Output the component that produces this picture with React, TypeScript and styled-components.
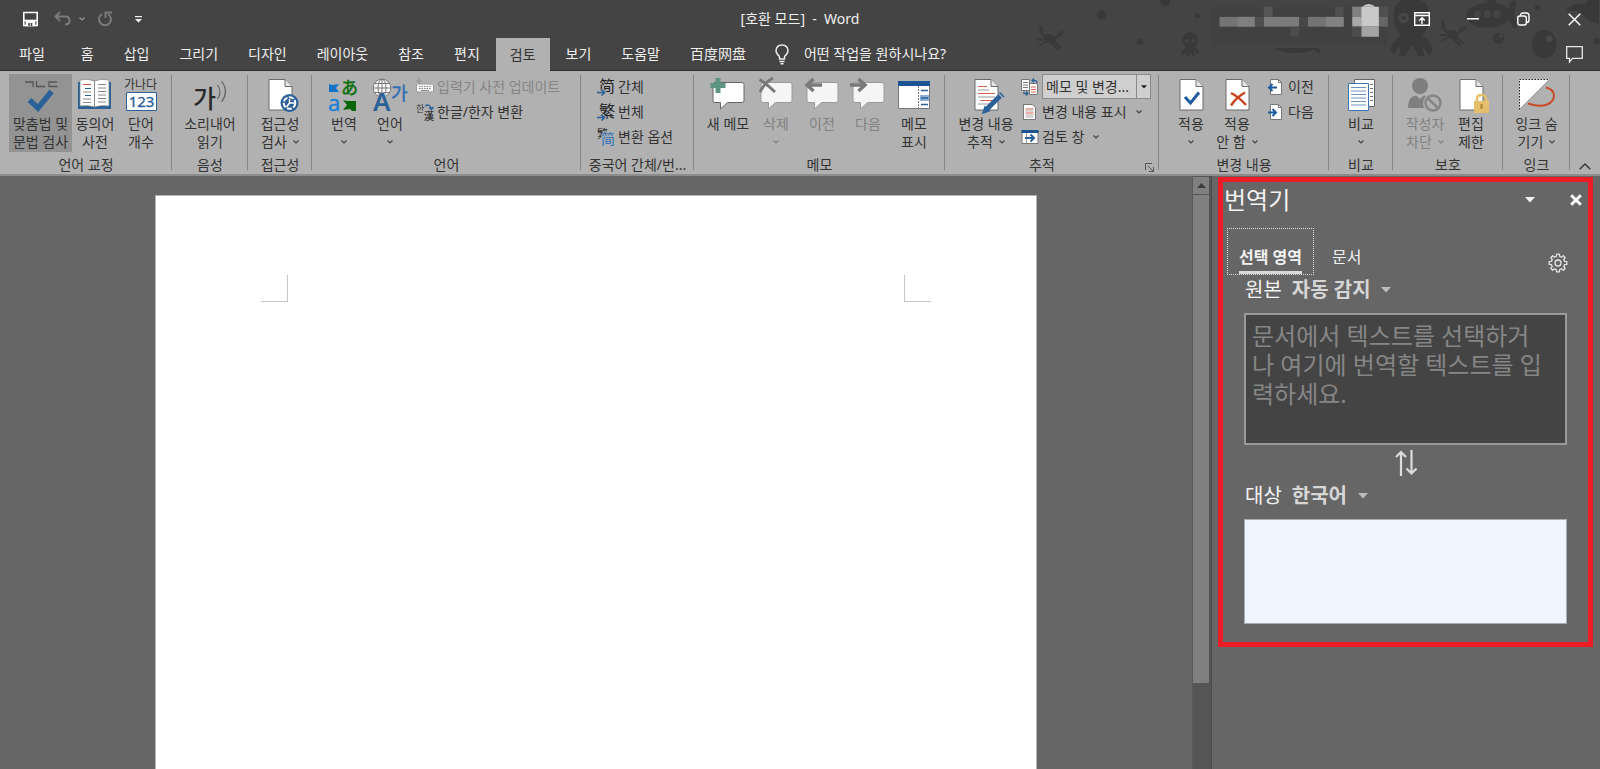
import React from "react";
import styled, { createGlobalStyle, css } from "styled-components";

const FONT = `"Noto Sans", "Noto Sans CJK KR", "Noto Sans CJK SC", sans-serif`;

const GlobalStyle = createGlobalStyle`
  *, *::before, *::after { box-sizing: border-box; }
  body { margin: 0; background: #666; font-family: ${FONT}; font-size: 14px; line-height: 18px; color: #333; }
  button, select, textarea { font: inherit; color: inherit; margin: 0; padding: 0; border: 0; background: none; border-radius: 0; }
  svg { display: block; flex: none; overflow: visible; }
  h1, h2 { margin: 0; font-weight: 400; }
`;

/* ---------- Frame ---------- */

const Window = styled.div`
  display: flex;
  flex-direction: column;
  min-height: 100vh;
  overflow: hidden;
`;

const Header = styled.header`
  position: relative;
  background: #444;
  color: #f0f0f0;
  border-bottom: 1px solid #2e2c2d;
`;

const SeaPattern = styled.svg`
  position: absolute;
  top: 0;
  right: 0;
  overflow: hidden;
`;

const TitleBar = styled.div`
  position: relative;
  display: grid;
  grid-template-columns: 1fr auto 1fr;
  align-items: center;
  height: 38px;
`;

const QuickAccess = styled.div`
  display: flex;
  align-items: center;
  padding-left: 22px;
`;

const QuickButton = styled.button<{ $gap: number }>`
  margin-right: ${(p) => p.$gap}px;
`;

const Title = styled.h1`
  font-size: 14px;
  line-height: 18px;
  white-space: pre;
`;

const WindowControls = styled.div`
  display: flex;
  justify-content: flex-end;
`;

const WindowButton = styled.button`
  display: grid;
  place-items: center;
  width: 51px;
  height: 36px;
`;

const TabBar = styled.nav`
  position: relative;
  display: flex;
  height: 32px;
  padding-left: 4px;
`;

const Tab = styled.button<{ $active?: boolean; $wide?: boolean }>`
  padding: 0 14px;
  margin: 0 ${(p) => (p.$wide ? 7 : 1)}px 0 1px;
  white-space: nowrap;
  ${(p) => p.$active && css`
    background: #b1b1b1;
    height: 33px;
    color: #333;
  `}
`;

const TellMe = styled.button`
  display: flex;
  align-items: center;
  gap: 15px;
  margin-left: 14px;
  white-space: nowrap;
`;

const CommentButton = styled.button`
  margin-left: auto;
  padding: 0 17px;
`;

/* ---------- Ribbon ---------- */

const Ribbon = styled.div`
  display: flex;
  height: 105px;
  background: #b1b1b1;
  border-bottom: 2px solid #8d8d8d;
`;

const Group = styled.section<{ $width: number; $pad?: number }>`
  flex: none;
  position: relative;
  display: flex;
  flex-direction: column;
  width: ${(p) => p.$width}px;
  padding: 3px 0 0 ${(p) => p.$pad ?? 0}px;

  &::after {
    content: "";
    position: absolute;
    top: 4px;
    right: 0;
    width: 1px;
    height: 95px;
    background: #858585;
  }
`;

const GroupBody = styled.div<{ $center?: boolean }>`
  display: flex;
  height: 81px;
  justify-content: ${(p) => (p.$center ? "center" : "flex-start")};
`;

const GroupFooter = styled.div<{ $pad?: number }>`
  display: flex;
  align-items: center;
  height: 19px;
  margin-left: -${(p) => p.$pad ?? 0}px;
`;

const GroupName = styled.h2`
  flex: 1;
  font-size: 14px;
  line-height: 18px;
  text-align: center;
  white-space: nowrap;
`;

const Launcher = styled.button`
  padding: 6px 5px 0 6px;
`;

const BigButton = styled.button<{ $width: number; $pressed?: boolean }>`
  flex: none;
  display: flex;
  flex-direction: column;
  align-items: center;
  width: ${(p) => p.$width}px;
  height: 78px;
  padding-top: 4px;
  background: ${(p) => (p.$pressed ? "#939393" : "none")};
  white-space: nowrap;

  &:disabled { color: #818181; }
`;

const BigLabel = styled.span`
  display: flex;
  align-items: center;
  gap: 6px;
  height: 18px;

  svg + & { margin-top: 3px; }
`;

const SmallList = styled.div<{ $pad: number }>`
  flex: none;
  display: flex;
  flex-direction: column;
  padding-left: ${(p) => p.$pad}px;
`;

const SmallButton = styled.button`
  display: flex;
  align-items: center;
  gap: 3px;
  height: 25px;
  white-space: nowrap;

  &:disabled { color: #858585; }
`;

const SmallLabel = styled.span`
  margin-right: 6px;
`;

const SmallRow = styled.div`
  display: flex;
  align-items: center;
  gap: 3px;
  height: 25px;
`;

const MarkupBox = styled.span`
  display: flex;
  align-items: center;
  width: 109px;
  height: 25px;
  border: 1px solid #8b8b8b;
  background: #cfcfcf;
`;

const MarkupSelect = styled.select`
  appearance: none;
  flex: 1;
  min-width: 0;
  height: 23px;
  padding-left: 3px;
`;

const MarkupArrow = styled.span`
  display: grid;
  place-items: center;
  width: 14px;
  height: 23px;
  border-left: 1px solid #8b8b8b;
`;

const Collapse = styled.button`
  align-self: flex-end;
  margin-left: auto;
  padding: 0 9px 4px;
`;

/* ---------- Workspace ---------- */

const Workspace = styled.div`
  flex: 1;
  display: flex;
  background: #666;
`;

const Canvas = styled.main`
  flex: 1;
  min-width: 0;
  display: flex;
  justify-content: center;
  padding-top: 19px;
`;

const Page = styled.article`
  display: flex;
  justify-content: space-between;
  width: 882px;
  padding: 79px 105px 0;
  background: #fff;
  border: 1px solid #b4b4b4;
  border-bottom: 0;
`;

const MarginMark = styled.span<{ $side: "left" | "right" }>`
  width: 27px;
  height: 27px;
  border-bottom: 1px solid #c4c4c4;
  border-${(p) => (p.$side === "left" ? "right" : "left")}: 1px solid #c4c4c4;
`;

const ScrollBar = styled.div`
  display: flex;
  flex-direction: column;
  width: 20px;
  padding: 1px 2px 0 0;
  background: #555;
  border-left: 1px solid #5a5a5a;
  border-right: 1px solid #4c4c4c;
`;

const ScrollUp = styled.button`
  display: grid;
  place-items: center;
  height: 17px;
  margin-bottom: 1px;
  background: #808080;
`;

const ScrollThumb = styled.div`
  flex: 85;
  background: #808080;
`;

const ScrollRest = styled.div`
  flex: 15;
  background: #555;
`;

const Side = styled.aside`
  flex: none;
  width: 388px;
  padding: 1px 7px 0 6px;
`;

const Translator = styled.section`
  border: 5px solid #ed1c24;
  padding-bottom: 18px;
  color: #f2f2f2;
`;

const PaneHeader = styled.div`
  display: flex;
  align-items: center;
  height: 36px;
  padding: 0 6px 0 1px;
`;

const PaneTitle = styled.h2`
  flex: 1;
  font-size: 24px;
  line-height: 36px;
`;

const PaneButton = styled.button`
  margin-left: 35px;
`;

const PaneTabs = styled.div`
  display: flex;
  align-items: flex-start;
  height: 47px;
  margin-top: 10px;
  padding: 0 20px 0 4px;
  font-size: 16px;
  line-height: 24px;
`;

const PaneTab = styled.button<{ $active?: boolean }>`
  height: 47px;
  padding: 16px 11px 0;
  border: 1px dotted ${(p) => (p.$active ? "#ddd" : "transparent")};
  font-weight: ${(p) => (p.$active ? 700 : 400)};
  margin-right: 6px;
`;

const PaneTabText = styled.span<{ $active?: boolean }>`
  display: block;
  height: 29px;
  border-bottom: ${(p) => (p.$active ? "3px solid #d9d9d9" : "0")};
`;

const GearButton = styled.button`
  margin: 25px 0 0 auto;
`;

const LanguageRow = styled.div`
  display: flex;
  align-items: center;
  gap: 10px;
  height: 30px;
  padding-left: 22px;
  font-size: 20px;
  line-height: 30px;
`;

const LanguageSelect = styled.select`
  appearance: none;
  height: 30px;
  font-weight: 700;
  color: #d6d6d6;
`;

const TextBox = styled.textarea<{ $target?: boolean }>`
  display: block;
  width: calc(100% - 42px);
  height: ${(p) => (p.$target ? 105 : 132)}px;
  margin: 8px 21px 0;
  padding: 6px 18px 6px 6px;
  border: ${(p) => (p.$target ? "1px solid #a8adb3" : "2px solid #999")};
  background: ${(p) => (p.$target ? "#eff6ff" : "#444")};
  color: ${(p) => (p.$target ? "#222" : "#eee")};
  font-size: 24px;
  line-height: 29px;
  resize: none;
  overflow: hidden;

  &::placeholder { color: #868686; opacity: 1; }
`;

const SwapButton = styled.button`
  display: block;
  margin: 0 auto;
  height: 36px;
`;

/* ---------- Icons ---------- */

const BLUE = "#2b6199";

const Chevron = ({ color = "#444" }: { color?: string }) => (
  <svg width="6" height="4" viewBox="0 0 6 4" fill="none" stroke={color} strokeWidth="1.2"><path d="M.5.5 3 3 5.5.5" /></svg>
);

const Triangle = ({ w = 10, color = "#f2f2f2" }: { w?: number; color?: string }) => (
  <svg width={w} height="6" viewBox="0 0 10 6" fill={color}><path d="M0 0h10L5 5.5z" /></svg>
);

const Big = ({ children }: { children: React.ReactNode }) => (
  <svg width="36" height="34" viewBox="0 0 36 34" fill="none" fontFamily={FONT}>{children}</svg>
);

const Small = ({ children }: { children: React.ReactNode }) => (
  <svg width="18" height="18" viewBox="0 0 18 18" fill="none" fontFamily={FONT}>{children}</svg>
);

const Doc = () => (
  <>
    <path d="M7 1.5h16l7 7v23.500H7z" fill="#fff" stroke="#6b6b6b" />
    <path d="M23 1.500v7h7" fill="#e6e6e6" stroke="#6b6b6b" />
  </>
);

const SpellIcon = () => (
  <Big>
    <path d="M2 4h8v5M13.500 3v5.500h8.500M34 4h-8v4.500h8.500" stroke="#555" strokeWidth="1.300" />
    <path d="M6.500 22l8.500 8L28.500 13.500" stroke={BLUE} strokeWidth="5.500" />
  </Big>
);

const BookIcon = () => (
  <Big>
    <path d="M1 4h33v27H1z" fill={BLUE} />
    <path d="M3 2q8-2 14.500 1v26q-6-2-14.500-1z" fill="#fff" stroke="#777" strokeWidth=".7" />
    <path d="M32 2q-8-2-14.500 1v26q6-2 14.500-1z" fill="#fff" stroke="#777" strokeWidth=".7" />
    <path d="M6 6.500h8" stroke="#d0553a" />
    <path d="M8 10.500h6M8 17.500h6" stroke={BLUE} />
    <path d="M6 14h8M6 21h8M6 24.500h8M21 6.500h8M21 10h8M21 13.500h8M21 17h8M21 20.500h8M21 24h8" stroke="#888" />
  </Big>
);

const CountIcon = () => (
  <Big>
    <text x="1" y="11" fontSize="12" fill="#333">가나다</text>
    <path d="M3.500 14.500h30v18h-30z" fill="#fff" stroke={BLUE} />
    <text x="18.500" y="29" fontSize="15" textAnchor="middle" fill={BLUE} stroke={BLUE} strokeWidth=".3">123</text>
  </Big>
);

const SpeakIcon = () => (
  <Big>
    <text x="1" y="30" fontSize="25" fontWeight="500" fill="#2a2a2a">가</text>
    <path d="M25.500 7q5 7 0 14M29.500 3q8 10.500 0 21" stroke="#666" strokeWidth="1.200" />
  </Big>
);

const AccessIcon = () => (
  <Big>
    <Doc />
    <circle cx="27.500" cy="25" r="9" fill={BLUE} />
    <circle cx="27.500" cy="25" r="5.800" stroke="#fff" strokeWidth="2" strokeDasharray="5 1.500" />
    <path d="M27.500 21v4h4.500M27.500 25l-3 4" stroke="#fff" strokeWidth="1.500" />
  </Big>
);

const TranslateIcon = () => (
  <Big>
    <path d="M3 6l3 1 7-1-3 4 3 4H3z" fill="#1273c8" />
    <text x="2" y="33" fontSize="22" fill="#1e7fd6" stroke="#1e7fd6" strokeWidth=".4">a</text>
    <text x="15" y="16" fontSize="17" fill="#0a6e0a" stroke="#0a6e0a" strokeWidth=".5">あ</text>
    <path d="M17 22l4 1h9v10h-4l-2-2-7 1 4-5z" fill="#0a6606" />
  </Big>
);

const LanguageIcon = () => (
  <Big>
    <circle cx="10" cy="10" r="8.800" fill="#fff" stroke="#777" />
    <ellipse cx="10" cy="10" rx="4" ry="8.800" stroke="#777" />
    <path d="M10 1v18M1 10h18M2.500 5.500h15M2.500 14.500h15" stroke="#777" />
    <text x="1" y="33" fontSize="26" fontWeight="600" fill={BLUE} stroke="#b1b1b1" strokeWidth=".8" paintOrder="stroke">A</text>
    <text x="19" y="22" fontSize="18" fill="#2f70b5" stroke="#2f70b5" strokeWidth=".5">가</text>
  </Big>
);

const Bubble = ({ faded }: { faded?: boolean }) => (
  <path d="M5 4.500h27q2 0 2 2v16q0 2-2 2H17.500L10.500 31v-6.500H5q-2 0-2-2v-16q0-2 2-2z" fill={faded ? "#f5f5f5" : "#fff"} stroke={faded ? "#9a9a9a" : "#666"} />
);

const NewCommentIcon = () => (
  <Big><Bubble /><path d="M5.500 0h5v5h5v5h-5v5h-5v-5h-5V5h5z" fill="#5c9680" /></Big>
);
const DeleteCommentIcon = () => (
  <Big><Bubble faded /><path d="M1.500 1.500Q9 6 17 14M15 0Q7 4 2 14" stroke="#797979" strokeWidth="3" /></Big>
);
const PrevCommentIcon = () => (
  <Big><Bubble faded /><path d="M18 7H3M9.500 1 3 7l6.500 6" stroke="#797979" strokeWidth="3.500" /></Big>
);
const NextCommentIcon = () => (
  <Big><Bubble faded /><path d="M0 7h15M8.500 1 15 7l-6.500 6" stroke="#797979" strokeWidth="3.500" /></Big>
);

const ShowCommentsIcon = () => (
  <Big>
    <path d="M2.500 3.500h31v27h-31z" fill="#fff" stroke="#777" />
    <path d="M2 3h32v5H2z" fill="#1c5493" />
    <path d="M22.500 8v22" stroke="#777" strokeDasharray="2 1" />
    <path d="M24 17h9v6h-9z" fill="#8fb0d6" />
    <path d="M25 12.500h7M25 20h7M25 26.500h7" stroke={BLUE} strokeWidth="1.300" />
  </Big>
);

const TrackIcon = () => (
  <Big>
    <Doc />
    <path d="M10 8.500h9M10 15.500h17M12 22.500h14" stroke="#d9604a" />
    <path d="M10 12h11M10 19h17M10 26h12" stroke="#999" />
    <path d="M19 31 32 18" stroke={BLUE} strokeWidth="5" />
    <path d="M15 35l2-6 4 4zM31.500 14.500l4.500 4.500" fill={BLUE} stroke={BLUE} strokeWidth="1.500" />
  </Big>
);

const AcceptIcon = () => (<Big><Doc /><path d="M12 19l5.500 6L26 14.500" stroke="#1f5c9e" strokeWidth="3" /></Big>);
const RejectIcon = () => (<Big><Doc /><path d="M12 15q8 4 15 12M26 14.500q-9 5-14 13" stroke="#c8441f" strokeWidth="2.500" /></Big>);

const CompareIcon = () => (
  <Big>
    <path d="M11.500 1.500h20v27h-20z" fill="#fff" stroke="#666" />
    <path d="M27 6.500h3M27 10.500h3M27 14.500h3M27 18.500h3M27 22.500h3" stroke="#777" />
    <path d="M5.500 5.500h20v27h-20z" fill="#fff" stroke="#3a76b5" />
    <path d="M8 9.500h15M8 13h15M8 16.500h15M8 20h15M8 23.500h15M8 27h15" stroke="#6f93bd" />
  </Big>
);

const BlockIcon = () => (
  <Big>
    <circle cx="13" cy="8" r="8" fill="#7f7f7f" />
    <path d="M1 30q0-12 8-12.500l4 3.500 4-3.500q6 .5 7 6v6.500z" fill="#7f7f7f" />
    <circle cx="26" cy="25" r="10" fill="#b1b1b1" />
    <circle cx="26" cy="25" r="7.500" stroke="#858585" strokeWidth="2.500" />
    <path d="M20.500 20l11 10.500" stroke="#858585" strokeWidth="2.500" />
  </Big>
);

const RestrictIcon = () => (
  <Big>
    <Doc />
    <path d="M21 23h15v12H21z" fill="#e6bf6c" />
    <path d="M24 23v-2.500q0-3.500 4.500-3.500t4.500 3.500v2.500" stroke="#e6bf6c" strokeWidth="2.500" />
    <path d="M28.500 26v5" stroke="#a78337" strokeWidth="2" />
  </Big>
);

const InkIcon = () => (
  <Big>
    <path d="M27 9.500q8 2 8 8t-7 9-19-1" stroke="#c94a26" strokeWidth="2" />
    <path d="M.5 1.500h30L.5 31.500z" fill="#fff" />
    <path d="M.500 31.500v-30h30" stroke="#222" strokeDasharray="1.500 1.500" />
    <path d="M30.500 1.500.5 31.500" stroke="#777" strokeWidth=".7" />
  </Big>
);

const KeyboardIcon = () => (
  <Small>
    <path d="M1.500 6h15q1 0 1 1v6q0 1-1 1h-15q-1 0-1-1V7q0-1 1-1z" fill="#f5f5f5" stroke="#999" />
    <path d="M3 8.500h12M3 10.500h12" stroke="#888" strokeDasharray="1.500 1" />
    <path d="M5 12.500h8" stroke="#888" />
    <path d="M3 0v6M0 3h6" stroke="#999" strokeWidth="1.500" />
  </Small>
);

const HanjaIcon = () => (
  <Small>
    <text x="0" y="9" fontSize="9" fill="#333">한</text>
    <text x="8" y="17" fontSize="10" fill="#222" stroke="#222" strokeWidth=".2">漢</text>
    <path d="M9 3q5-3 6.500 3M13 4.500l2.500 2 2-2.500" stroke={BLUE} strokeWidth="1.300" />
  </Small>
);

const HanIcon = ({ glyph }: { glyph: string }) => (
  <Small>
    <text x="2" y="14" fontSize="16" fill="#222">{glyph}</text>
    <path d="M0 14.500h7M4.500 11.500l3 3-3 3" stroke="#b1b1b1" strokeWidth="3.500" />
    <path d="M0 14.500h7M4.500 11.500l3 3-3 3" stroke={BLUE} strokeWidth="1.700" />
  </Small>
);

const HanOptionIcon = () => (
  <Small>
    <text x="0" y="10" fontSize="11" fill="#222">繁</text>
    <text x="4" y="16" fontSize="14" fill="#2f70b5" stroke="#b1b1b1" strokeWidth="1.500" paintOrder="stroke">简</text>
  </Small>
);

const MarkupIcon = () => (
  <Small>
    <path d="M.5 1.500h8v11h-8zM8.500 5.500h8v11h-8z" fill="#fff" stroke="#777" />
    <path d="M2 4.500h5M2 7h5M2 9.500h5" stroke="#777" />
    <path d="M10 9h5M10 11.500h5M10 14h5" stroke="#d9604a" />
    <path d="M11 2.500q5-1 5 2.500M13 .5l-2 2 2 2M3 14v1.500h4M5 13.500l2 2-2 2" stroke={BLUE} strokeWidth="1.300" />
  </Small>
);

const ShowMarkupIcon = () => (
  <Small>
    <path d="M2.500 1.500h9l3 3v12h-12z" fill="#fff" stroke="#777" />
    <path d="M4.500 6h8M4.500 10h8" stroke="#d9604a" />
    <path d="M4.500 8h8M4.500 12h8M4.500 14h8" stroke="#aaa" />
  </Small>
);

const ReviewPaneIcon = () => (
  <Small>
    <path d="M1 2.500h16v13H1z" fill="#fff" stroke="#777" />
    <path d="M.5 2h17v3H.5z" fill="#1c5493" />
    <path d="M5.500 5v10" stroke="#999" />
    <path d="M4 10h9M9.500 6.500l3.500 3.500-3.500 3.500" stroke={BLUE} strokeWidth="2" />
  </Small>
);

const MoveIcon = ({ back }: { back?: boolean }) => (
  <Small>
    <path d="M3.500 1.500h8l3 3v12h-11z" fill="#fff" stroke="#777" />
    <path d="M11.500 1.500v3h3" stroke="#777" />
    <path d={back ? "M10 9.500H2M5.500 6l-3.500 3.500L5.500 13" : "M1 9.500h8M5.500 6 9 9.500 5.500 13"} stroke="#1f5c9e" strokeWidth="2" />
  </Small>
);

const SaveIcon = () => (
  <svg width="17" height="16" viewBox="0 0 17 16" fill="none" stroke="#fff" strokeWidth="1.600">
    <path d="M1.800 1.500h13.400v13H1.800z" /><path d="M2 9.500h13" /><path d="M4.500 10v4.500h8V10" fill="#fff" /><path d="M7 12v3M9.500 12v3" stroke="#444" />
  </svg>
);
const UndoIcon = () => (
  <svg width="17" height="16" viewBox="0 0 17 16" fill="none" stroke="#7b7b7b" strokeWidth="2"><path d="M6 1 1.500 5.500 6 10M2 5.500h9q4.500 0 4.500 4t-4.500 4" /></svg>
);
const RedoIcon = () => (
  <svg width="16" height="16" viewBox="0 0 16 16" fill="none" stroke="#7b7b7b" strokeWidth="2"><path d="M5 3a6 6 0 1 0 6 0M8.500 7V1.500H15" /></svg>
);
const CustomizeIcon = () => (
  <svg width="7" height="7" viewBox="0 0 7 7" fill="#f0f0f0"><path d="M0 0h7v1.300H0zM0 3h7L3.500 6.500z" /></svg>
);
const BulbIcon = () => (
  <svg width="14" height="21" viewBox="0 0 14 21" fill="none" stroke="#f0f0f0" strokeWidth="1.400"><path d="M4.500 15v-2.500Q1 9.500 1 6.500 1.500 1 7 1t6 5.500q0 3-3.500 6V15z" /><path d="M4.500 17.500h5M5.500 19.800h3" /></svg>
);

const pixels: [number, number, number, number, string][] = [
  [533, 18, 470, 106, "#414141"], [556, 45, 95, 26, "#747474"], [604, 45, 47, 26, "#7f7f7f"],
  [674, 45, 94, 26, "#7b7b7b"], [674, 18, 24, 27, "#555"], [792, 45, 95, 26, "#747474"], [840, 45, 47, 26, "#828282"],
  [745, 71, 23, 26, "#4c4c4c"], [650, 45, 24, 26, "#505050"], [768, 45, 24, 26, "#484848"], [864, 18, 23, 27, "#505050"],
  [910, 18, 24, 27, "#808080"], [910, 45, 24, 26, "#a8a8a8"], [981, 18, 24, 27, "#505050"], [981, 45, 24, 26, "#666"],
  [934, 18, 47, 53, "#c9c9c9"], [934, 71, 47, 27, "#a3a3a3"], [910, 71, 24, 27, "#4c4c4c"],
];

const Sea = () => (
  <SeaPattern width="590" height="60" viewBox="0 0 1568 160" fill="#393939" aria-hidden="true">
    <circle cx="241" cy="40" r="12" /><circle cx="411" cy="4" r="13" /><circle cx="497" cy="41" r="7" /><circle cx="344" cy="112" r="8" />
    <g id="crab"><ellipse cx="105" cy="104" rx="17" ry="12" transform="rotate(15 105 104)" />
      <path d="M90 98 78 84l2-16M118 100l14-6 8-12M92 106l-22 0M92 112l-16 10M115 112l20 16M108 114l18 18M78 72l8 12M128 84l-2 12" stroke="#393939" strokeWidth="5" fill="none" /></g>
    <use href="#crab" transform="translate(1072 -12)" />
    <path d="M458 106q0-20 20-20t20 20q0 14-8 19l12 14-5 4-9-10 2 18h-6l-4-14-8 14-5-2 4-16-12 14-4-6 12-16q-9-7-9-19z" />
    <circle cx="469" cy="108" r="5" fill="#444" /><circle cx="486" cy="108" r="5" fill="#444" />
    <path d="M1020 45q0-50 48-50t48 50q0 30-20 50 24 10 28 40l-10 12-18-28 6 30-14 2-18-32-20 32-16-4 6-30-18 28-10-10q4-30 28-40-20-22-20-50z" />
    <circle cx="1047" cy="48" r="10" stroke="#484848" strokeWidth="8" /><circle cx="1090" cy="48" r="10" stroke="#484848" strokeWidth="8" />
    <path d="M1214 42q4-30 56-34V0h24v8q24 4 32 18l8-24h14l-6 32 8 40h-12l-12-22q-14 22-56 22-52 0-56-32z" />
    <circle cx="1244" cy="38" r="10" fill="#444" /><circle cx="1270" cy="38" r="10" fill="#444" /><circle cx="1296" cy="38" r="10" fill="#444" />
    <circle cx="1300" cy="102" r="15" /><circle cx="1306" cy="96" r="4" fill="#484848" />
    <ellipse cx="1422" cy="118" rx="33" ry="38" /><circle cx="1436" cy="103" r="9" fill="#484848" />
    <circle cx="1404" cy="20" r="7" /><circle cx="1562" cy="110" r="9" />
    <path d="M1478 32q20-30 50-20l14-14h26v66q-36-8-46-30-20-8-44-2z" />
    <path d="M706 132q50 20 100 0l22 14-8-18H700z" />
    {pixels.map(([x, y, w, h, c]) => <rect key={`${x}-${y}`} x={x} y={y} width={w} height={h} fill={c} />)}
    <path d="M936 18q18-15 36 0z" fill="#c9c9c9" />
  </SeaPattern>
);

/* ---------- Composition ---------- */

interface BigProps {
  icon: React.ReactNode;
  lines: string[];
  width?: number;
  menu?: boolean;
  disabled?: boolean;
  pressed?: boolean;
}

const Command = ({ icon, lines, width = 46, menu, disabled, pressed }: BigProps) => {
  const rows = menu && lines.length === 1 ? [...lines, ""] : lines;
  return (
    <BigButton $width={width} $pressed={pressed} disabled={disabled}>
      {icon}
      {rows.map((line, i) => (
        <BigLabel key={i}>
          {line}
          {menu && i === rows.length - 1 && <Chevron color={disabled ? "#818181" : "#444"} />}
        </BigLabel>
      ))}
    </BigButton>
  );
};

const SmallCommand = ({ icon, label, menu, disabled }: { icon: React.ReactNode; label: string; menu?: boolean; disabled?: boolean }) => (
  <SmallButton disabled={disabled}>
    {icon}
    <SmallLabel>{label}</SmallLabel>
    {menu && <Chevron />}
  </SmallButton>
);

interface GroupProps {
  name: string;
  width: number;
  pad?: number;
  center?: boolean;
  launcher?: boolean;
  children: React.ReactNode;
}

const RibbonGroup = ({ name, width, pad, center, launcher, children }: GroupProps) => (
  <Group $width={width} $pad={pad}>
    <GroupBody $center={center}>{children}</GroupBody>
    <GroupFooter $pad={pad}>
      <GroupName>{name}</GroupName>
      {launcher && (
        <Launcher aria-label="추적 옵션">
          <svg width="9" height="9" viewBox="0 0 9 9" fill="none" stroke="#555"><path d="M.5 7V.5H7M3 3l5 5M8.500 4v4.500H4" /></svg>
        </Launcher>
      )}
    </GroupFooter>
  </Group>
);

const tabs = ["파일", "홈", "삽입", "그리기", "디자인", "레이아웃", "참조", "편지", "검토", "보기", "도움말", "百度网盘"];

export default function App() {
  return (
    <Window>
      <GlobalStyle />
      <Header>
        <Sea />
        <TitleBar>
          <QuickAccess>
            <QuickButton $gap={15} aria-label="저장"><SaveIcon /></QuickButton>
            <QuickButton $gap={8} aria-label="실행 취소"><UndoIcon /></QuickButton>
            <QuickButton $gap={12} aria-label="실행 취소 목록"><Chevron color="#999" /></QuickButton>
            <QuickButton $gap={22} aria-label="다시 실행"><RedoIcon /></QuickButton>
            <QuickButton $gap={0} aria-label="빠른 실행 도구 모음 사용자 지정"><CustomizeIcon /></QuickButton>
          </QuickAccess>
          <Title>{"[호환 모드]  -  Word"}</Title>
          <WindowControls>
            <WindowButton aria-label="리본 메뉴 표시 옵션">
              <svg width="16" height="14" viewBox="0 0 16 14" fill="none" stroke="#fff" strokeWidth="1.400"><path d="M.7.7h14.600v12.600H.7zM1 3.500h14M8 12V6M5.200 8.500 8 5.800l2.800 2.700" /></svg>
            </WindowButton>
            <WindowButton aria-label="최소화">
              <svg width="12" height="2" viewBox="0 0 12 2" fill="#fff"><path d="M0 0h12v1.500H0z" /></svg>
            </WindowButton>
            <WindowButton aria-label="이전 크기로 복원">
              <svg width="13" height="14" viewBox="0 0 13 14" fill="none" stroke="#fff" strokeWidth="1.400"><rect x=".8" y="4" width="8.500" height="9" rx="2" /><path d="M3.500 3.500q0-2.500 2.500-2.500h3.500Q12 1 12 4v4q0 2.500-2.500 2.500" /></svg>
            </WindowButton>
            <WindowButton aria-label="닫기">
              <svg width="13" height="13" viewBox="0 0 13 13" stroke="#fff" strokeWidth="1.400"><path d="M.7.7l11.600 11.600M12.300.7.7 12.300" /></svg>
            </WindowButton>
          </WindowControls>
        </TitleBar>
        <TabBar>
          {tabs.map((t) => (
            <Tab key={t} $active={t === "검토"} $wide={t === "파일"}>{t}</Tab>
          ))}
          <TellMe><BulbIcon />어떤 작업을 원하시나요?</TellMe>
          <CommentButton aria-label="메모">
            <svg width="17" height="17" viewBox="0 0 17 17" fill="none" stroke="#e8e8e8" strokeWidth="1.300"><path d="M.7.7h15.600v11.600H6.500L3.500 16v-3.700H.7z" /></svg>
          </CommentButton>
        </TabBar>
      </Header>

      <Ribbon>
        <RibbonGroup name="언어 교정" width={172} pad={9}>
          <Command icon={<SpellIcon />} lines={["맞춤법 및", "문법 검사"]} width={63} pressed />
          <Command icon={<BookIcon />} lines={["동의어", "사전"]} />
          <Command icon={<CountIcon />} lines={["단어", "개수"]} />
        </RibbonGroup>
        <RibbonGroup name="음성" width={76} center>
          <Command icon={<SpeakIcon />} lines={["소리내어", "읽기"]} width={60} />
        </RibbonGroup>
        <RibbonGroup name="접근성" width={64} center>
          <Command icon={<AccessIcon />} lines={["접근성", "검사"]} menu />
        </RibbonGroup>
        <RibbonGroup name="언어" width={269} pad={9}>
          <Command icon={<TranslateIcon />} lines={["번역"]} menu />
          <Command icon={<LanguageIcon />} lines={["언어"]} menu />
          <SmallList $pad={3}>
            <SmallCommand icon={<KeyboardIcon />} label="입력기 사전 업데이트" disabled />
            <SmallCommand icon={<HanjaIcon />} label="한글/한자 변환" />
          </SmallList>
        </RibbonGroup>
        <RibbonGroup name="중국어 간체/번..." width={113}>
          <SmallList $pad={16}>
            <SmallCommand icon={<HanIcon glyph="简" />} label="간체" />
            <SmallCommand icon={<HanIcon glyph="繁" />} label="번체" />
            <SmallCommand icon={<HanOptionIcon />} label="변환 옵션" />
          </SmallList>
        </RibbonGroup>
        <RibbonGroup name="메모" width={251} pad={9}>
          <Command icon={<NewCommentIcon />} lines={["새 메모"]} width={50} />
          <Command icon={<DeleteCommentIcon />} lines={["삭제"]} menu disabled />
          <Command icon={<PrevCommentIcon />} lines={["이전"]} disabled />
          <Command icon={<NextCommentIcon />} lines={["다음"]} disabled />
          <Command icon={<ShowCommentsIcon />} lines={["메모", "표시"]} />
        </RibbonGroup>
        <RibbonGroup name="추적" width={214} pad={8} launcher>
          <Command icon={<TrackIcon />} lines={["변경 내용", "추적"]} width={66} menu />
          <SmallList $pad={2}>
            <SmallRow>
              <MarkupIcon />
              <MarkupBox>
                <MarkupSelect aria-label="검토용 표시"><option>메모 및 변경...</option></MarkupSelect>
                <MarkupArrow><Triangle w={6} color="#222" /></MarkupArrow>
              </MarkupBox>
            </SmallRow>
            <SmallCommand icon={<ShowMarkupIcon />} label="변경 내용 표시" menu />
            <SmallCommand icon={<ReviewPaneIcon />} label="검토 창" menu />
          </SmallList>
        </RibbonGroup>
        <RibbonGroup name="변경 내용" width={170} pad={9}>
          <Command icon={<AcceptIcon />} lines={["적용"]} menu />
          <Command icon={<RejectIcon />} lines={["적용", "안 함"]} menu />
          <SmallList $pad={7}>
            <SmallCommand icon={<MoveIcon back />} label="이전" />
            <SmallCommand icon={<MoveIcon />} label="다음" />
          </SmallList>
        </RibbonGroup>
        <RibbonGroup name="비교" width={64} center>
          <Command icon={<CompareIcon />} lines={["비교"]} menu />
        </RibbonGroup>
        <RibbonGroup name="보호" width={110} pad={9}>
          <Command icon={<BlockIcon />} lines={["작성자", "차단"]} menu disabled />
          <Command icon={<RestrictIcon />} lines={["편집", "제한"]} />
        </RibbonGroup>
        <RibbonGroup name="잉크" width={67} center>
          <Command icon={<InkIcon />} lines={["잉크 숨", "기기"]} menu />
        </RibbonGroup>
        <Collapse aria-label="리본 메뉴 축소">
          <svg width="12" height="7" viewBox="0 0 12 7" fill="none" stroke="#333" strokeWidth="1.400"><path d="M.7 6.300 6 1l5.300 5.300" /></svg>
        </Collapse>
      </Ribbon>

      <Workspace>
        <Canvas>
          <Page>
            <MarginMark $side="left" />
            <MarginMark $side="right" />
          </Page>
        </Canvas>
        <ScrollBar>
          <ScrollUp aria-label="위로 스크롤">
            <svg width="9" height="5" viewBox="0 0 9 5" fill="#3c3c3c"><path d="M0 5 4.500 0 9 5z" /></svg>
          </ScrollUp>
          <ScrollThumb />
          <ScrollRest />
        </ScrollBar>
        <Side>
          <Translator>
            <PaneHeader>
              <PaneTitle>번역기</PaneTitle>
              <PaneButton aria-label="작업창 옵션"><Triangle /></PaneButton>
              <PaneButton aria-label="닫기">
                <svg width="12" height="12" viewBox="0 0 12 12" stroke="#fff" strokeWidth="3"><path d="M1.200 1.200l9.600 9.600M10.800 1.200l-9.600 9.600" /></svg>
              </PaneButton>
            </PaneHeader>
            <PaneTabs>
              <PaneTab $active><PaneTabText $active>선택 영역</PaneTabText></PaneTab>
              <PaneTab><PaneTabText>문서</PaneTabText></PaneTab>
              <GearButton aria-label="설정">
                <svg width="20" height="20" viewBox="-10 -10 20 20" fill="none" stroke="#e6e6e6" strokeWidth="1.300" strokeLinejoin="round">
                  <path d="M-1.700-6.500-1.400-8.800H1.400L1.700-6.500 3.500-5.800 5.300-7.200 7.200-5.300 5.800-3.500 6.500-1.700 8.800-1.400V1.400L6.500 1.700 5.800 3.500 7.200 5.300 5.300 7.200 3.500 5.800 1.700 6.500 1.400 8.800H-1.400L-1.700 6.500-3.500 5.800-5.300 7.200-7.200 5.300-5.800 3.500-6.500 1.700-8.800 1.400V-1.400L-6.500-1.700-5.800-3.500-7.200-5.300-5.300-7.200-3.500-5.800z" />
                  <circle r="3" />
                </svg>
              </GearButton>
            </PaneTabs>
            <LanguageRow>
              <label htmlFor="source-language">원본</label>
              <LanguageSelect id="source-language"><option>자동 감지</option></LanguageSelect>
              <Triangle color="#bdbdbd" />
            </LanguageRow>
            <TextBox aria-label="원본 텍스트" placeholder="문서에서 텍스트를 선택하거나 여기에 번역할 텍스트를 입력하세요." />
            <SwapButton aria-label="언어 바꾸기">
              <svg width="22" height="26" viewBox="0 0 22 26" fill="none" stroke="#dcdcdc" strokeWidth="2.200"><path d="M6 26V2.500M1 7l5-5 5 5M16.500 0v23M11.500 18.500l5 5 5-5" /></svg>
            </SwapButton>
            <LanguageRow>
              <label htmlFor="target-language">대상</label>
              <LanguageSelect id="target-language"><option>한국어</option></LanguageSelect>
              <Triangle color="#bdbdbd" />
            </LanguageRow>
            <TextBox $target readOnly aria-label="번역된 텍스트" />
          </Translator>
        </Side>
      </Workspace>
    </Window>
  );
}
